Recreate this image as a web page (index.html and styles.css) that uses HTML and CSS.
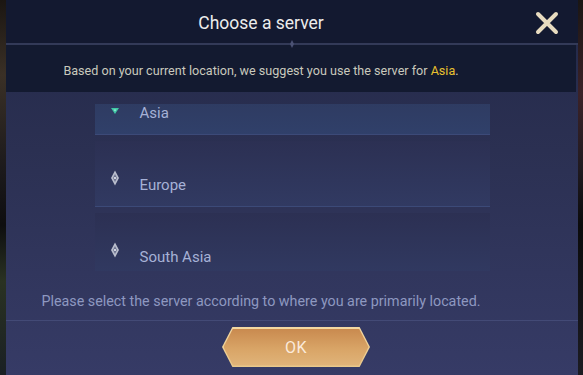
FILE: index.html
```html
<!DOCTYPE html>
<html>
<head>
<meta charset="utf-8">
<link rel="stylesheet" href="styles.css">
</head>
<body>
<div class="page">
  <div class="edge edge-left"></div>
  <div class="dialog">
    <div class="header">
      <h1 class="title">Choose a server</h1>
      <div class="header-right">
        <svg class="close" width="26" height="26" viewBox="0 0 26 26">
          <path d="M4 4 L22 22 M22 4 L4 22" stroke="#e8dcc0" stroke-width="4" stroke-linecap="round" fill="none"/>
        </svg>
      </div>
    </div>
    <div class="divider">
      <span class="ornament"></span>
    </div>
    <div class="suggest">Based on your current location, we suggest you use the server for <span class="hl">Asia</span>.</div>
    <div class="body">
      <div class="list">
        <div class="list-inner">
          <div class="row row-selected">
            <span class="icon">
              <svg width="10" height="10" viewBox="0 0 10 10"><path d="M1 2 L9 2 L5 8 Z" fill="#3fc7a4"/><path d="M3.5 3.5 L6.5 3.5 L5 5.6 Z" fill="#9ff0d8"/></svg>
            </span>
            <span class="name">Asia</span>
          </div>
          <div class="row">
            <span class="icon">
              <svg width="10" height="16" viewBox="0 0 10 16"><path d="M5 0.5 L9 8 L5 15.5 L1 8 Z" fill="#b9bdcc"/><path d="M5 4 L7 8 L5 12 L3 8 Z" fill="#6d7390"/><circle cx="5" cy="8" r="1.1" fill="#e8eaf2"/></svg>
            </span>
            <span class="name">Europe</span>
          </div>
          <div class="row">
            <span class="icon">
              <svg width="10" height="16" viewBox="0 0 10 16"><path d="M5 0.5 L9 8 L5 15.5 L1 8 Z" fill="#b9bdcc"/><path d="M5 4 L7 8 L5 12 L3 8 Z" fill="#6d7390"/><circle cx="5" cy="8" r="1.1" fill="#e8eaf2"/></svg>
            </span>
            <span class="name">South Asia</span>
          </div>
        </div>
      </div>
      <p class="note">Please select the server according to where you are primarily located.</p>
      <div class="footer">
        <button class="ok"><span class="ok-inner">OK</span></button>
      </div>
    </div>
  </div>
  <div class="edge edge-right"></div>
</div>
</body>
</html>
```

FILE: styles.css
```css
html, body {
  margin: 0;
  padding: 0;
  width: 583px;
  height: 375px;
  overflow: hidden;
  background: #15131a;
  font-family: Roboto, "Noto Sans", "Liberation Sans", sans-serif;
}

.page {
  display: flex;
  width: 583px;
  height: 375px;
}

.edge {
  flex: 0 0 auto;
}
.edge-left {
  width: 6px;
  background: linear-gradient(180deg, #1b1612 0%, #3a3026 20%, #1c1a1c 45%, #0e0e10 60%, #2a3222 75%, #1a2024 100%);
}
.edge-right {
  width: 5px;
  background: linear-gradient(180deg, #1a1614 0%, #3b2228 25%, #201a20 45%, #0b0b0c 60%, #1c1c22 100%);
}

.dialog {
  flex: 1;
  display: flex;
  flex-direction: column;
  background: linear-gradient(180deg, #232949 0%, #2b3052 40%, #363b66 100%);
}

.header {
  height: 43px;
  display: grid;
  grid-template-columns: 1fr 62px;
  align-items: center;
  background: #131930;
}
.title {
  margin: 0;
  font-size: 17.5px;
  font-weight: 400;
  color: #ececec;
  line-height: 43px;
  padding-top: 2px;
  text-align: center;
}
.header-right {
  display: flex;
  justify-content: center;
  padding-top: 1px;
}
.close {
  display: block;
}

.divider {
  height: 2px;
  background: #333a58;
  display: flex;
  justify-content: center;
  align-items: center;
}
.ornament {
  width: 4px;
  height: 8px;
  background: #4b5274;
  clip-path: polygon(50% 0, 100% 50%, 50% 100%, 0 50%);
}

.suggest {
  height: 47px;
  margin-right: 2px;
  padding-right: 60px;
  background: #131a30;
  color: #c9c9bd;
  font-size: 12.6px;
  line-height: 51px;
  text-align: center;
}
.hl {
  color: #e9c12e;
}

.body {
  flex: 1;
  display: flex;
  flex-direction: column;
  align-items: center;
}

.list {
  margin-top: 12px;
  width: 395px;
  height: 167px;
  overflow: hidden;
}
.list-inner {
  display: flex;
  flex-direction: column;
  gap: 6px;
  margin-top: -35px;
}
.row {
  height: 66px;
  box-sizing: border-box;
  display: flex;
  align-items: flex-start;
  background: linear-gradient(180deg, #2c3053 0%, #313a62 100%);
  border-bottom: 1px solid #3c4a78;
}
.row-selected {
  background: linear-gradient(180deg, #2d3659 0%, #30406a 100%);
}
.icon {
  width: 40px;
  display: flex;
  justify-content: center;
  margin-top: 29px;
  height: 16px;
  align-items: center;
}
.row-selected .icon {
  margin-top: 37px;
  height: 10px;
}
.name {
  margin-left: 5px;
  margin-top: 37px;
  font-size: 15px;
  line-height: 15px;
  color: #a6b1d6;
}

.note {
  align-self: stretch;
  margin: 21px 0 0;
  padding-right: 62px;
  font-size: 14.3px;
  line-height: 18px;
  color: #8e98c0;
  text-align: center;
}

.footer {
  align-self: stretch;
  margin-top: 10px;
  border-top: 1px solid #434a76;
  display: flex;
  justify-content: center;
  padding-top: 6px;
}

.ok {
  width: 148px;
  height: 40px;
  padding: 1.5px;
  border: 0;
  margin-left: 8px;
  background: linear-gradient(180deg, #f3d8a2 0%, #e9c88a 100%);
  clip-path: polygon(7% 0, 93% 0, 100% 50%, 93% 100%, 7% 100%, 0 50%);
  display: flex;
  box-sizing: border-box;
  font-family: inherit;
  cursor: pointer;
}
.ok-inner {
  flex: 1;
  display: flex;
  align-items: center;
  justify-content: center;
  background: linear-gradient(180deg, #c98a4f 0%, #d9a567 55%, #e0b47a 100%);
  clip-path: polygon(6.6% 0, 93.4% 0, 100% 50%, 93.4% 100%, 6.6% 100%, 0 50%);
  color: #fbeadb;
  font-size: 16px;
  letter-spacing: 0.5px;
}
```
